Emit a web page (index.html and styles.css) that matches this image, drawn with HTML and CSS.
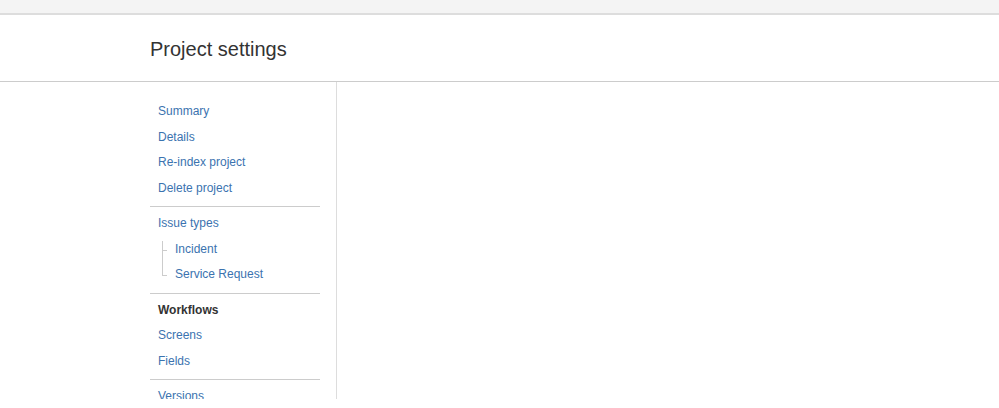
FILE: index.html
```html
<!DOCTYPE html>
<html>
<head>
<meta charset="utf-8">
<title>Project settings</title>
<link rel="stylesheet" href="styles.css">
</head>
<body>
<div class="page">
  <div class="topbar"></div>
  <header class="header">
    <h1 class="title">Project settings</h1>
  </header>
  <div class="main">
    <nav class="sidebar">
      <ul class="group">
        <li class="item"><a class="link" href="#">Summary</a></li>
        <li class="item"><a class="link" href="#">Details</a></li>
        <li class="item"><a class="link" href="#">Re-index project</a></li>
        <li class="item"><a class="link" href="#">Delete project</a></li>
      </ul>
      <div class="sep"></div>
      <ul class="group">
        <li class="item"><a class="link" href="#">Issue types</a>
          <ul class="sub">
            <li class="item sub-item"><a class="link" href="#">Incident</a></li>
            <li class="item sub-item"><a class="link" href="#">Service Request</a></li>
          </ul>
        </li>
      </ul>
      <div class="sep"></div>
      <ul class="group">
        <li class="item"><span class="current">Workflows</span></li>
        <li class="item"><a class="link" href="#">Screens</a></li>
        <li class="item"><a class="link" href="#">Fields</a></li>
      </ul>
      <div class="sep"></div>
      <ul class="group">
        <li class="item"><a class="link" href="#">Versions</a></li>
      </ul>
    </nav>
    <section class="content"></section>
  </div>
</div>
</body>
</html>
```
FILE: styles.css
```css
html, body {
  margin: 0;
  padding: 0;
  background: #ffffff;
}
body {
  font-family: "Liberation Sans", Arial, sans-serif;
  color: #333333;
}
.page {
  height: 399px;
  overflow: hidden;
  display: flex;
  flex-direction: column;
}
.topbar {
  height: 13px;
  background: #f4f4f4;
  border-bottom: 2px solid #dddddd;
  flex: none;
}
.header {
  height: 67px;
  border-bottom: 1px solid #cccccc;
  display: flex;
  align-items: center;
  padding: 2px 0 0 150px;
  box-sizing: border-box;
  flex: none;
}
.title {
  margin: 0;
  font-size: 20px;
  font-weight: normal;
  line-height: 24px;
  color: #333333;
}
.main {
  flex: 1;
  display: flex;
  min-height: 0;
}
.sidebar {
  width: 170px;
  margin-left: 150px;
  padding: 17px 16px 0 0;
  border-right: 1px solid #dddddd;
  flex: none;
}
.group {
  list-style: none;
  margin: 0;
  padding: 0;
}
.item {
  font-size: 12px;
  line-height: 25.5px;
  padding-left: 8px;
}
.link {
  color: #3b73af;
  text-decoration: none;
}
.current {
  color: #333333;
  font-weight: bold;
}
.sep {
  height: 1px;
  background: #cccccc;
  margin: 5px 0 4px;
}
.sub {
  list-style: none;
  margin: 0 0 0 -8px;
  padding: 0;
  position: relative;
}
.sub::before {
  content: "";
  position: absolute;
  left: 12px;
  top: 4px;
  bottom: 12px;
  width: 1px;
  background: #cccccc;
}
.sub-item {
  position: relative;
  padding-left: 25px;
}
.sub-item::before {
  content: "";
  position: absolute;
  left: 13px;
  top: 13px;
  width: 4px;
  height: 1px;
  background: #cccccc;
}
.content {
  flex: 1;
}
```
